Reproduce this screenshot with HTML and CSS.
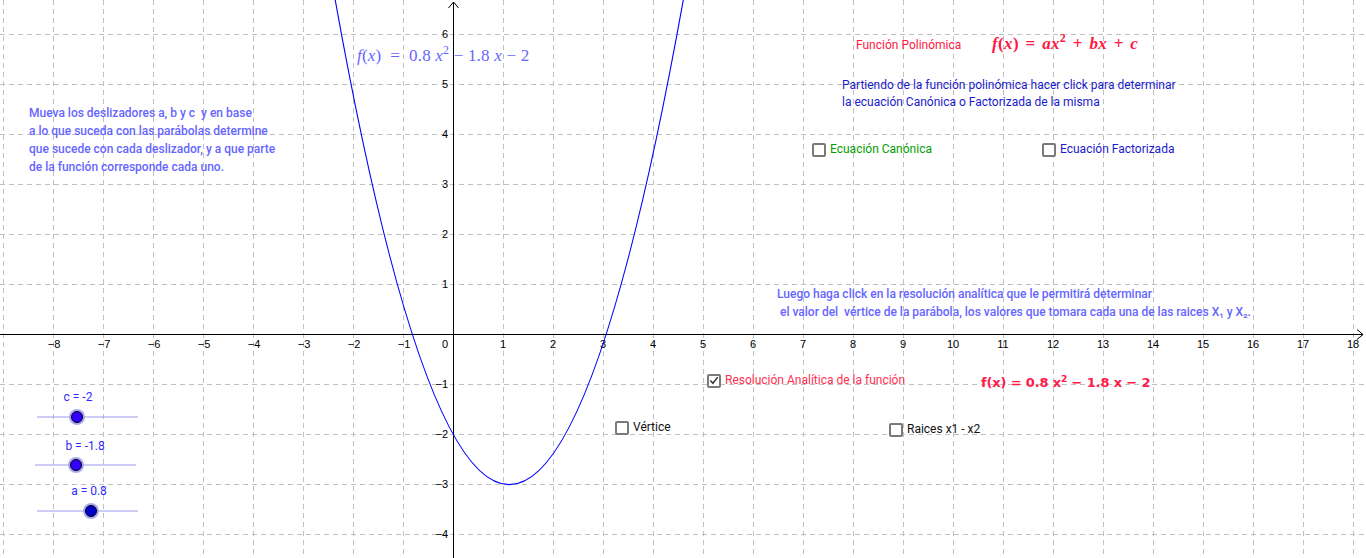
FILE: index.html
```html
<!DOCTYPE html>
<html lang="es">
<head>
<meta charset="utf-8">
<title>Función Polinómica</title>
<link rel="stylesheet" href="styles.css">
</head>
<body>
<div class="canvas">
  <svg class="graph" width="1366" height="558" viewBox="0 0 1366 558" xmlns="http://www.w3.org/2000/svg">
    <g class="grid">
      <path d="M3 0V558M53 0V558M103 0V558M153 0V558M203 0V558M253 0V558M303 0V558M353 0V558M403 0V558M503 0V558M553 0V558M603 0V558M653 0V558M703 0V558M753 0V558M803 0V558M853 0V558M903 0V558M953 0V558M1003 0V558M1053 0V558M1103 0V558M1153 0V558M1203 0V558M1253 0V558M1303 0V558M1353 0V558"/>
      <path d="M0 34H1366M0 84H1366M0 134H1366M0 184H1366M0 234H1366M0 284H1366M0 384H1366M0 434H1366M0 484H1366M0 534H1366"/>
    </g>
    <g class="axes">
      <path d="M0 334.5H1363M453.5 558V2"/>
      <path d="M1357 329.5L1363 334.5L1357 339.5M448.5 8L453.5 2L458.5 8" fill="none"/>
    </g>
    <g class="xlabels">
      <text x="54" y="348">−8</text><text x="104" y="348">−7</text><text x="154" y="348">−6</text><text x="204" y="348">−5</text>
      <text x="254" y="348">−4</text><text x="304" y="348">−3</text><text x="354" y="348">−2</text><text x="404" y="348">−1</text>
      <text x="503" y="348">1</text><text x="553" y="348">2</text><text x="603" y="348">3</text><text x="653" y="348">4</text>
      <text x="703" y="348">5</text><text x="753" y="348">6</text><text x="803" y="348">7</text><text x="853" y="348">8</text>
      <text x="903" y="348">9</text><text x="953" y="348">10</text><text x="1003" y="348">11</text><text x="1053" y="348">12</text>
      <text x="1103" y="348">13</text><text x="1153" y="348">14</text><text x="1203" y="348">15</text><text x="1253" y="348">16</text>
      <text x="1303" y="348">17</text><text x="1353" y="348">18</text>
    </g>
    <g class="ylabels">
      <text x="448" y="38">6</text><text x="448" y="88">5</text><text x="448" y="138">4</text><text x="448" y="188">3</text>
      <text x="448" y="238">2</text><text x="448" y="288">1</text><text x="448" y="348">0</text>
      <text x="448" y="388">−1</text><text x="448" y="438">−2</text><text x="448" y="488">−3</text><text x="448" y="538">−4</text>
    </g>
    <path class="curve" d="M328 -41Q509.25 1010.25 690.5 -41"/>
    <g class="sliders">
      <text class="slabel" x="78" y="401">c = -2</text>
      <line class="strack" x1="37" y1="417" x2="138" y2="417"/>
      <circle class="halo" cx="77" cy="417" r="8"/>
      <circle class="knob" cx="77" cy="417" r="5.5"/>

      <text class="slabel" x="85" y="450">b = -1.8</text>
      <line class="strack" x1="35" y1="465" x2="136" y2="465"/>
      <circle class="halo" cx="76" cy="465" r="8"/>
      <circle class="knob" cx="76" cy="465" r="5.5"/>

      <text class="slabel" x="89" y="495">a = 0.8</text>
      <line class="strack" x1="37" y1="511" x2="138" y2="511"/>
      <circle class="halo" cx="91" cy="511" r="8"/>
      <circle class="knob knob-a" cx="91" cy="511" r="5.5"/>
    </g>
  </svg>

  <div class="note instr">Mueva los deslizadores a, b y c &nbsp;y en base<br>a lo que suceda con las parábolas determine<br>que sucede con cada deslizador, y a que parte<br>de la función corresponde cada uno.</div>

  <div class="math fx-blue"><i>f</i>(<i>x</i>) &nbsp;= &nbsp;0.8 <i>x</i><sup>2</sup> − 1.8 <i>x</i> − 2</div>

  <div class="note poly-title">Función Polinómica</div>
  <div class="math poly-formula"><i>f</i>(<i>x</i>) = <i>ax</i><sup>2</sup> + <i>bx</i> + <i>c</i></div>

  <div class="note partiendo">Partiendo de la función polinómica hacer click para determinar<br>la ecuación Canónica o Factorizada de la misma</div>

  <div class="check cb-canon"><span class="box"></span><span>Ecuación Canónica</span></div>
  <div class="check cb-factor"><span class="box"></span><span>Ecuación Factorizada</span></div>

  <div class="note luego">Luego haga click en la resolución analítica que le permitirá determinar<br>&nbsp;el valor del &nbsp;vértice de la parábola, los valores que tomara cada una de las raices X₁ y X₂.</div>

  <div class="check cb-resol"><span class="box checked"><svg width="11" height="11" viewBox="0 0 11 11"><path d="M1.5 5.5L4.3 8.6L9.6 1.8" fill="none" stroke="#333" stroke-width="1.6"/></svg></span><span>Resolución Analítica de la función</span></div>
  <div class="fx-red">f(x) = 0.8 x<sup>2</sup> − 1.8 x − 2</div>

  <div class="check cb-vertice"><span class="box"></span><span>Vértice</span></div>
  <div class="check cb-raices"><span class="box"></span><span>Raices x1 - x2</span></div>
</div>
</body>
</html>
```

FILE: styles.css
```css
html, body {
  margin: 0;
  padding: 0;
  background: #ffffff;
}

.canvas {
  position: relative;
  width: 1366px;
  height: 558px;
  overflow: hidden;
  background: #ffffff;
  font-family: Roboto, "Liberation Sans", sans-serif;
}

.graph {
  position: absolute;
  left: 0;
  top: 0;
  display: block;
}

.grid path {
  stroke: #c0c0c0;
  stroke-width: 1;
  stroke-dasharray: 5 4;
  fill: none;
  shape-rendering: crispEdges;
}

.axes path {
  stroke: #000000;
  stroke-width: 1;
  fill: none;
}

.xlabels text,
.ylabels text {
  font-family: "Liberation Sans", Arial, sans-serif;
  font-size: 11px;
  fill: #000000;
}

.xlabels text {
  text-anchor: middle;
}

.ylabels text {
  text-anchor: end;
}

.curve {
  fill: none;
  stroke: #0000ff;
  stroke-width: 1.1;
}

.slabel {
  font-family: Roboto, "Liberation Sans", sans-serif;
  font-size: 12px;
  fill: #2a2aff;
  text-anchor: middle;
}

.strack {
  stroke: #9a9aee;
  stroke-width: 1;
}

.halo {
  fill: #9b9bf0;
  opacity: 0.85;
}

.knob {
  fill: #3300ff;
  stroke: #000000;
  stroke-width: 1;
}

.knob-a {
  fill: #0000cc;
}

.note {
  position: absolute;
  font-size: 12px;
  white-space: nowrap;
}

.instr {
  left: 29px;
  top: 104px;
  line-height: 18px;
  color: #6666ff;
  font-weight: 500;
}

.luego {
  left: 777px;
  top: 285px;
  line-height: 18px;
  color: #6666ff;
  font-weight: 500;
}

.partiendo {
  left: 842px;
  top: 77px;
  line-height: 17px;
  color: #1a1acc;
}

.poly-title {
  left: 856px;
  top: 37px;
  line-height: 16px;
  color: #ff1744;
}

.math {
  position: absolute;
  font-family: "Liberation Serif", "DejaVu Serif", serif;
  white-space: nowrap;
}

.math sup,
.fx-red sup {
  font-size: 70%;
  line-height: 0;
  vertical-align: 0.6em;
}

.fx-blue {
  left: 357px;
  top: 46px;
  font-size: 17px;
  line-height: 20px;
  letter-spacing: 0.2px;
  color: #6666ff;
}

.poly-formula {
  left: 992px;
  top: 34px;
  font-size: 17px;
  line-height: 20px;
  word-spacing: 2px;
  letter-spacing: 0.35px;
  color: #ff1744;
  font-weight: bold;
}

.fx-red {
  position: absolute;
  left: 981px;
  top: 373px;
  font-family: "DejaVu Sans", sans-serif;
  font-size: 13px;
  line-height: 20px;
  letter-spacing: -0.15px;
  font-weight: bold;
  color: #ff1a4a;
  white-space: nowrap;
}

.check {
  position: absolute;
  display: flex;
  align-items: center;
  gap: 4px;
  font-size: 12px;
  line-height: 15px;
  white-space: nowrap;
}

.box {
  display: flex;
  align-items: center;
  justify-content: center;
  width: 10px;
  height: 10px;
  border: 2px solid #7a7a7a;
  border-radius: 2px;
  background: #ffffff;
}

.cb-canon {
  left: 812px;
  top: 142px;
  color: #00a000;
}

.cb-factor {
  left: 1042px;
  top: 142px;
  color: #1a1acc;
}

.cb-resol {
  left: 707px;
  top: 373px;
  color: #ff3050;
}

.cb-vertice {
  left: 615px;
  top: 420px;
  color: #111111;
}

.cb-raices {
  left: 889px;
  top: 422px;
  color: #111111;
}
```
